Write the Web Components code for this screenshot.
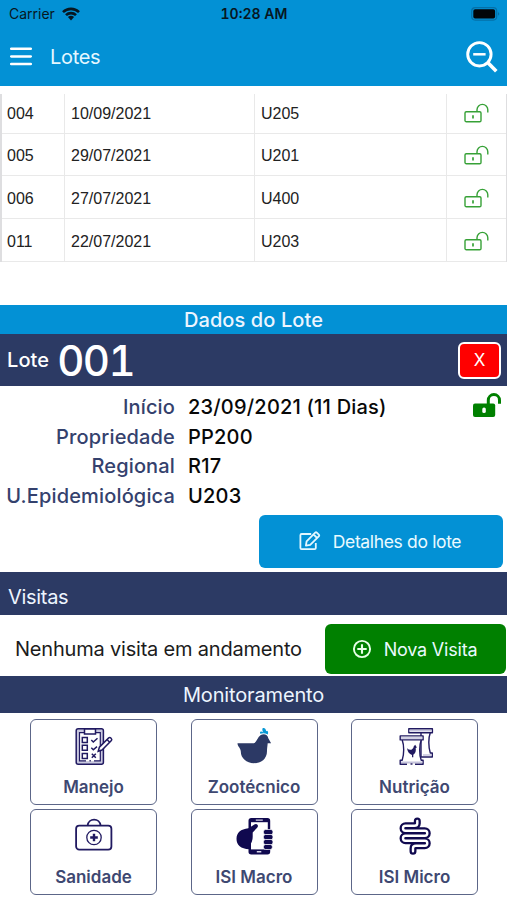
<!DOCTYPE html>
<html lang="pt-BR">
<head>
<meta charset="utf-8">
<title>Lotes</title>
<style>
  body {
    margin: 0;
    width: 507px;
    height: 900px;
    overflow: hidden;
    background: #fff;
    font-family: Inter, "Liberation Sans", sans-serif;
  }
</style>
</head>
<body>
<lotes-app></lotes-app>

<script>
const ICONS = {
  wifi: /* html */`<svg viewBox="0 0 18 14" width="18" height="14" fill="none" stroke="#071722" stroke-width="2.6">
    <path d="M1 5.1a11.5 11.5 0 0 1 16 0M4 8.2a7 7 0 0 1 10 0"/><path d="M9 13.4 5.9 10.1a4.5 4.5 0 0 1 6.2 0z" fill="#071722" stroke="none"/></svg>`,
  battery: /* html */`<svg viewBox="0 0 30 14" width="30" height="14">
    <rect x=".7" y=".7" width="25" height="12.4" rx="3.5" fill="none" stroke="#0570a8" stroke-width="1.2"/>
    <rect x="2.3" y="2.3" width="21.8" height="9.2" rx="1.8" fill="#020508"/><path d="M27.3 4.8q1.8 2 0 4z" fill="#055e8e"/></svg>`,
  menu: /* html */`<svg viewBox="0 0 22 20" width="22" height="20" stroke="#fff" stroke-width="2.5" stroke-linecap="round">
    <path d="M1.2 1.8h19.6M1.2 9.4h19.6M1.2 17h19.6"/></svg>`,
  zoomOut: /* html */`<svg viewBox="0 0 32 32" width="32" height="32" fill="none" stroke="#fff" stroke-width="2.9">
    <circle cx="13.4" cy="13.3" r="11.7"/><path d="M7.2 13.3h12.4" stroke-width="2.5"/><path d="m21.7 21.6 8.6 8.7" stroke-width="3.6"/></svg>`,
  lock: /* html */`<svg viewBox="0 0 25 20" width="25" height="20" fill="none" stroke="#37a137" stroke-width="1.4">
    <rect x="1" y="8.7" width="16" height="10" rx="1.3"/><path d="M13 8.5V6.8a5.4 5.4 0 0 1 10.8 0v2.8"/><path d="M9 12.2v3.2" stroke-width="1.7"/></svg>`,
  lockSolid: /* html */`<svg viewBox="0 0 29 26" width="29" height="26">
    <rect x="1" y="11.4" width="22.2" height="13.6" rx="2" fill="#008000"/>
    <path d="M16.3 12V8.2a5.6 5.6 0 0 1 11.2 0v3.6" fill="none" stroke="#008000" stroke-width="3"/>
    <rect x="10.3" y="15.4" width="3.5" height="5.7" rx="1.7" fill="#fff"/></svg>`,
  edit: /* html */`<svg viewBox="0 0 22 20" width="22" height="20" fill="none" stroke="#e3f7ff" stroke-width="1.8" stroke-linejoin="round">
    <path d="M12.2 3H2.6Q1.4 3 1.4 4.2V17q0 1.2 1.2 1.2h13q1.2 0 1.2-1.2v-5"/>
    <path d="m7.6 10.3 8.6-8.6q.8-.8 1.6 0l2 2q.8.8 0 1.6l-8.6 8.6-4.3.8zM14.5 3.4l3.6 3.6"/></svg>`,
  plus: /* html */`<svg viewBox="0 0 20 20" width="20" height="20" fill="none" stroke="#e8ffe8" stroke-width="1.9">
    <circle cx="10" cy="10" r="8.1"/><path d="M10 5.3v9.4M5.3 10h9.4" stroke-width="2.1"/></svg>`,
  manejo: /* html */`<svg viewBox="0 0 40 40" width="40" height="40" fill="none" stroke="#211a61" stroke-width="1.5">
    <rect x="2.2" y="2.7" width="27.2" height="35.500" rx="2" fill="#c9c8df"/>
    <path d="M5.5 6.6h20.8v28.2H5.5z" fill="#fff" stroke-width="1.2"/>
    <path d="M10.5 3v5h11V3z" fill="#fff"/>
    <path d="M8.3 11.5h5v5h-5zM8.3 19.3h5v5h-5zM8.3 27.4h5v5h-5z"/>
    <path d="m17.3 14 2 2 4.2-3.7M17.3 21.8l2 2 3.7-3.2M17.8 27.7l4 4m0-4-4 4"/>
    <path d="m24.2 25.3 1.2-4.1 9.3-9.3q1.2-.9 2.4.3t.3 2.4L28 24z" fill="#fff"/><path d="m33 13.5 2.7 2.7"/>
    <path d="M12 34.8h8" stroke="#fff" stroke-width="1.7"/><path d="M15.5 34.8h1.3"/></svg>`,
  zootecnico: /* html */`<svg viewBox="1 0 40 40" width="40" height="40">
    <path fill="#2c3965" d="M4.5 17.2h16.3c2.3 0 3.7-5.9 7-8.1 3.1-2 6.9-.4 7.5 3.1l2.8 5h-3.4c-.3 3.4-.7 5.3-.7 8 0 7.7-6 12-13 12-7.5 0-13.2-4.9-13.2-11.6 0-3.8-3.4-4.5-3.3-8.4z"/>
    <path fill="#0798d5" d="M27.2 7.8Q26.4 5.600 28 5.600q1.7 0 2.500 1.200-2-3.200-.6-4.700 2.500-.8 3.300 3.200.9-1.200 1.700.3.600 1.500-.2 3-3.700-2.300-7.500-.8z"/></svg>`,
  nutricao: /* html */`<svg viewBox="0 0 40 40" width="40" height="40" fill="none" stroke="#211a61" stroke-width="1.4" stroke-linejoin="round">
    <path d="M13.8 2.7h23.6v4H13.8zM16 6.7h19.3c-2 5-2 14 0 20.3h2v4H26V6.7" fill="#fff"/>
    <path d="M5.2 9.9h22.9v4H5.2zM7.2 13.9h19c-2 5-2 15 0 20.3h1.9v4H5.2v-4h2c2-6 2-15 0-20.3z" fill="#fff"/>
    <path d="M14.5 4.7h22.2M6 12h21.3M6 36.2h21.3M28 29h8.6" stroke="#c5c3dc"/>
    <path d="M12 22.3q2.5 2.2 4.8 1.3 1.8-.8 2-3.3l1.4-1.5 1.7 2.7-1.2.6q.8 4.8-2.4 6.6v2.5h-1.3v-2.3q-4-1-5-6.6z" fill="#211a61" stroke="none"/>
    <path d="M12 38.2h8" stroke="#fff" stroke-width="1.9"/><path d="M15.5 38h2"/></svg>`,
  sanidade: /* html */`<svg viewBox="0 0 40 40" width="40" height="40" fill="none" stroke="#211a61" stroke-width="1.8">
    <rect x="2.1" y="9.600" width="35.3" height="24" rx="3.2"/>
    <path d="M13.6 9.600c.7-8 12.3-8 13 0"/><circle cx="20" cy="21.500" r="7.2" stroke-width="1.3"/><path d="M20 17.700v7.6M16.2 21.500h7.6" stroke-width="2.4"/></svg>`,
  macro: /* html */`<svg viewBox="0 0 40 40" width="40" height="40" fill="#10094f">
    <path d="M14.5 4.7Q14.5 2 17.2 2h16.3q2.7 0 2.7 2.7v31.1q0 2.7-2.7 2.7H17.2q-2.7 0-2.7-2.7z"/>
    <path d="M17 6.2h16.8v27.2H17z" fill="#fff"/><path d="M21.8 3.6h7v1.2h-7zM22.8 35h4.5v1.5h-4.5z" fill="#d7d5e8"/>
    <path d="m14.5 12.3 6.3-4.1q2.6-.8 3.1 1.3.3 1-1 2.4l-4.2 4.6v4.3q0 5.700-3.5 8.500v4Q2.500 32.700 2.500 22.800q0-9.200 12-10.500z"/>
    <g stroke="#fff" stroke-width=".7"><rect x="29.5" y="13.5" width="9.4" height="5.2" rx="2"/><rect x="29.5" y="18.5" width="9.4" height="5.2" rx="2"/><rect x="29.5" y="23.5" width="9.4" height="5.2" rx="2"/><rect x="29.5" y="28.5" width="8.8" height="5" rx="2"/></g></svg>`,
  micro: /* html */`<svg viewBox="0 0 40 40" width="40" height="40" fill="none" stroke-linecap="round" stroke-linejoin="round">
    <path d="M22.3 5v2.5q0 2.300-3 2.300H10.5a2.500 2.500 0 0 0 0 5h19.300a2.500 2.500 0 0 1 0 5H10.500a2.500 2.500 0 0 0 0 5h19.300a2.500 2.500 0 0 1 0 5H21q-3 0-3 2.500v3" stroke="#10094f" stroke-width="7"/>
    <path d="M22.3 5v2.5q0 2.300-3 2.300H10.5a2.500 2.500 0 0 0 0 5h19.300a2.500 2.500 0 0 1 0 5H10.500a2.500 2.500 0 0 0 0 5h19.300a2.500 2.500 0 0 1 0 5H21q-3 0-3 2.500v3" stroke="#fff" stroke-width="2.400"/></svg>`
};

class AppIcon extends HTMLElement {
  constructor() {
    super();
    this.attachShadow({ mode: "open" });
  }

  connectedCallback() {
    this.shadowRoot.innerHTML = /* html */`
    <style>
      :host { display: block; flex: none; }
      svg { display: block; }
    </style>
    ${ICONS[this.getAttribute("name")]}`;
  }
}

class StatusBar extends HTMLElement {
  constructor() {
    super();
    this.attachShadow({ mode: "open" });
  }

  static get styles() {
    return /* css */`
      :host {
        display: grid;
        grid-template-columns: 1fr auto 1fr;
        align-items: center;
        height: 28px;
        padding: 0 6px 0 7px;
        box-sizing: border-box;
        background: #0391d5;
        color: #071722;
        font-size: 14px;
      }

      .carrier {
        display: flex;
        align-items: center;
        gap: 7px;
        padding-left: 2px;
      }

      .time {
        font-weight: 600;
        font-variant-numeric: tabular-nums;
      }

      .carrier span,
      .time {
        padding-bottom: 2px;
      }

      .carrier app-icon,
      .battery {
        padding-bottom: 1px;
      }

      .battery {
        justify-self: end;
      }
    `;
  }

  connectedCallback() {
    this.shadowRoot.innerHTML = /* html */`
    <style>${StatusBar.styles}</style>
    <div class="carrier"><span>Carrier</span><app-icon name="wifi"></app-icon></div>
    <span class="time">10:28 AM</span>
    <app-icon class="battery" name="battery"></app-icon>`;
  }
}

class AppToolbar extends HTMLElement {
  constructor() {
    super();
    this.attachShadow({ mode: "open" });
  }

  static get styles() {
    return /* css */`
      :host {
        display: flex;
        align-items: center;
        height: 58px;
        padding: 0 9px 1px 10px;
        box-sizing: border-box;
        background: #0391d5;
        color: #e3f7ff;
        font-size: 20px;
      }

      .title {
        flex: 1;
        margin-left: 18px;
        letter-spacing: -0.3px;
      }
    `;
  }

  connectedCallback() {
    this.shadowRoot.innerHTML = /* html */`
    <style>${AppToolbar.styles}</style>
    <app-icon name="menu"></app-icon>
    <span class="title"><slot></slot></span>
    <app-icon name="zoomOut"></app-icon>`;
  }
}

class LotesTable extends HTMLElement {
  constructor() {
    super();
    this.attachShadow({ mode: "open" });
    this.rows = [
      ["004", "10/09/2021", "U205"],
      ["005", "29/07/2021", "U201"],
      ["006", "27/07/2021", "U400"],
      ["011", "22/07/2021", "U203"]
    ];
  }

  static get styles() {
    return /* css */`
      :host {
        display: block;
        margin-top: 8px;
        height: 168px;
        border-left: 2px solid #dedee0;
        border-right: 1px solid #dedee0;
        font: 16px "Liberation Sans", sans-serif;
        color: #222;
      }

      .row {
        display: grid;
        grid-template-columns: 63px 190px 192px 1fr;
        height: 42.8px;
        box-sizing: border-box;
        border-bottom: 1px solid #e9e9e9;
      }

      .row:first-of-type {
        height: 39.6px;
      }

      .row > * {
        display: flex;
        align-items: center;
        padding: 3px 0 0 6px;
        border-right: 1px solid #e9e9e9;
      }

      .row:first-of-type > span {
        padding-top: 1px;
      }

      .row > :first-child {
        padding-left: 5px;
      }

      .row > :last-child {
        border: 0;
        padding: 1px 0 0 17px;
      }

      .row:first-of-type > :last-child {
        padding-top: 0;
      }
    `;
  }

  connectedCallback() {
    this.shadowRoot.innerHTML = /* html */`
    <style>${LotesTable.styles}</style>
    ${this.rows.map(row => /* html */`<div class="row">
      ${row.map(cell => `<span>${cell}</span>`).join("")}
      <div><app-icon name="lock"></app-icon></div>
    </div>`).join("")}`;
  }
}

class SectionBar extends HTMLElement {
  constructor() {
    super();
    this.attachShadow({ mode: "open" });
  }

  connectedCallback() {
    this.shadowRoot.innerHTML = /* html */`
    <style>
      :host {
        display: flex;
        align-items: center;
        justify-content: var(--align, center);
        height: var(--height, 37px);
        padding: var(--shift, 0) 8px 0;
        box-sizing: border-box;
        background: var(--background, #2c3a64);
        color: #edf5ff;
        font-size: 20px;
      }
    </style>
    <span><slot></slot></span>`;
  }
}

class LoteTitle extends HTMLElement {
  constructor() {
    super();
    this.attachShadow({ mode: "open" });
  }

  static get styles() {
    return /* css */`
      :host {
        display: flex;
        align-items: center;
        height: 52px;
        padding: 0 6px 0 7px;
        box-sizing: border-box;
        background: #2c3a64;
        color: #fff;
      }

      .label {
        font-size: 20px;
        font-weight: 500;
        letter-spacing: 0.1px;
      }

      .number {
        flex: 1;
        margin-left: 8px;
        font-size: 42px;
        font-weight: 500;
        font-variant-numeric: tabular-nums;
        letter-spacing: -1.5px;
      }

      button {
        width: 43px;
        height: 37px;
        padding: 0;
        border: 2px solid #fff;
        border-radius: 6px;
        background: #f00;
        color: #fff;
        font: 17px Inter, sans-serif;
      }
    `;
  }

  connectedCallback() {
    this.shadowRoot.innerHTML = /* html */`
    <style>${LoteTitle.styles}</style>
    <span class="label">Lote</span>
    <span class="number"><slot></slot></span>
    <button>X</button>`;
  }
}

class LoteData extends HTMLElement {
  constructor() {
    super();
    this.attachShadow({ mode: "open" });
  }

  static get styles() {
    return /* css */`
      :host {
        display: flex;
        align-items: flex-start;
        justify-content: space-between;
        height: 123px;
        padding: 6px 6px 0 0;
        box-sizing: border-box;
      }

      dl {
        display: grid;
        grid-template-columns: 175px auto;
        grid-auto-rows: 29.7px;
        align-items: center;
        column-gap: 13px;
        margin: 0;
        font-size: 20px;
        font-weight: 500;
        white-space: nowrap;
      }

      dt {
        justify-self: end;
        color: #34416d;
        letter-spacing: 0.15px;
      }

      dd {
        margin: 0;
        color: #080808;
        letter-spacing: 0.2px;
      }
    `;
  }

  connectedCallback() {
    this.shadowRoot.innerHTML = /* html */`
    <style>${LoteData.styles}</style>
    <dl>
      <dt>Início</dt><dd>23/09/2021 (11 Dias)</dd>
      <dt>Propriedade</dt><dd>PP200</dd>
      <dt>Regional</dt><dd>R17</dd>
      <dt>U.Epidemiológica</dt><dd>U203</dd>
    </dl>
    <app-icon name="lockSolid"></app-icon>`;
  }
}

class ActionButton extends HTMLElement {
  constructor() {
    super();
    this.attachShadow({ mode: "open" });
  }

  connectedCallback() {
    this.shadowRoot.innerHTML = /* html */`
    <style>
      :host { display: block; }
      button {
        display: flex;
        align-items: center;
        justify-content: center;
        gap: 12px;
        width: 100%;
        height: 100%;
        padding: 0 2px 0 0;
        border: 0;
        border-radius: 6px;
        background: var(--background);
        color: #eafaff;
        font: var(--size, 18px) Inter, sans-serif;
        letter-spacing: var(--spacing, 0);
        white-space: nowrap;
      }
    </style>
    <button><app-icon name="${this.getAttribute("icon")}"></app-icon><span><slot></slot></span></button>`;
  }
}

class MenuCard extends HTMLElement {
  constructor() {
    super();
    this.attachShadow({ mode: "open" });
  }

  static get styles() {
    return /* css */`
      :host {
        display: flex;
        flex-direction: column;
        align-items: center;
        height: 86px;
        padding-top: 6px;
        box-sizing: border-box;
        border: 1.5px solid #5c6688;
        border-radius: 6px;
        color: #3e4871;
        font-size: 17px;
        font-weight: 600;
      }

      span {
        margin-top: 9px;
        line-height: 24px;
      }
    `;
  }

  connectedCallback() {
    this.shadowRoot.innerHTML = /* html */`
    <style>${MenuCard.styles}</style>
    <app-icon name="${this.getAttribute("icon")}"></app-icon>
    <span><slot></slot></span>`;
  }
}

class LotesApp extends HTMLElement {
  constructor() {
    super();
    this.attachShadow({ mode: "open" });
  }

  static get styles() {
    return /* css */`
      :host {
        display: block;
        width: 507px;
        height: 900px;
      }

      .dados {
        --background: #0391d5;
        --height: 29.5px;
        --shift: 2px;
        margin-top: 42.5px;
        font-weight: 500;
        letter-spacing: 0.1px;
      }

      .detalhes {
        --background: #0391d5;
        --size: 17.5px;
        --spacing: -0.35px;
        width: 244px;
        height: 53.5px;
        margin: 5.5px 4px 4px auto;
      }

      .visitas {
        --align: flex-start;
        --height: 43px;
        --shift: 6px;
        letter-spacing: -0.3px;
      }

      .visita {
        display: flex;
        align-items: flex-start;
        justify-content: space-between;
        height: 61px;
        padding: 9px 1px 0 15px;
        box-sizing: border-box;
        font-size: 20px;
        letter-spacing: -0.2px;
        color: #1c1c1c;
      }

      .visita span {
        line-height: 50px;
        white-space: nowrap;
      }

      .nova {
        --background: #008000;
        --spacing: -0.2px;
        width: 181px;
        height: 50px;
      }

      .monitoramento {
        letter-spacing: -0.15px;
      }

      .cards {
        display: grid;
        grid-template-columns: repeat(3, 127px);
        gap: 4px 33.5px;
        padding: 6px 0 0 30px;
      }
    `;
  }

  connectedCallback() {
    this.shadowRoot.innerHTML = /* html */`
    <style>${LotesApp.styles}</style>
    <status-bar></status-bar>
    <app-toolbar>Lotes</app-toolbar>
    <lotes-table></lotes-table>
    <section-bar class="dados">Dados do Lote</section-bar>
    <lote-title>001</lote-title>
    <lote-data></lote-data>
    <action-button class="detalhes" icon="edit">Detalhes do lote</action-button>
    <section-bar class="visitas">Visitas</section-bar>
    <div class="visita">
      <span>Nenhuma visita em andamento</span>
      <action-button class="nova" icon="plus">Nova Visita</action-button>
    </div>
    <section-bar class="monitoramento">Monitoramento</section-bar>
    <div class="cards">
      <menu-card icon="manejo">Manejo</menu-card>
      <menu-card icon="zootecnico">Zootécnico</menu-card>
      <menu-card icon="nutricao">Nutrição</menu-card>
      <menu-card icon="sanidade">Sanidade</menu-card>
      <menu-card icon="macro">ISI Macro</menu-card>
      <menu-card icon="micro">ISI Micro</menu-card>
    </div>`;
  }
}

customElements.define("app-icon", AppIcon);
customElements.define("status-bar", StatusBar);
customElements.define("app-toolbar", AppToolbar);
customElements.define("lotes-table", LotesTable);
customElements.define("section-bar", SectionBar);
customElements.define("lote-title", LoteTitle);
customElements.define("lote-data", LoteData);
customElements.define("action-button", ActionButton);
customElements.define("menu-card", MenuCard);
customElements.define("lotes-app", LotesApp);
</script>
</body>
</html>
